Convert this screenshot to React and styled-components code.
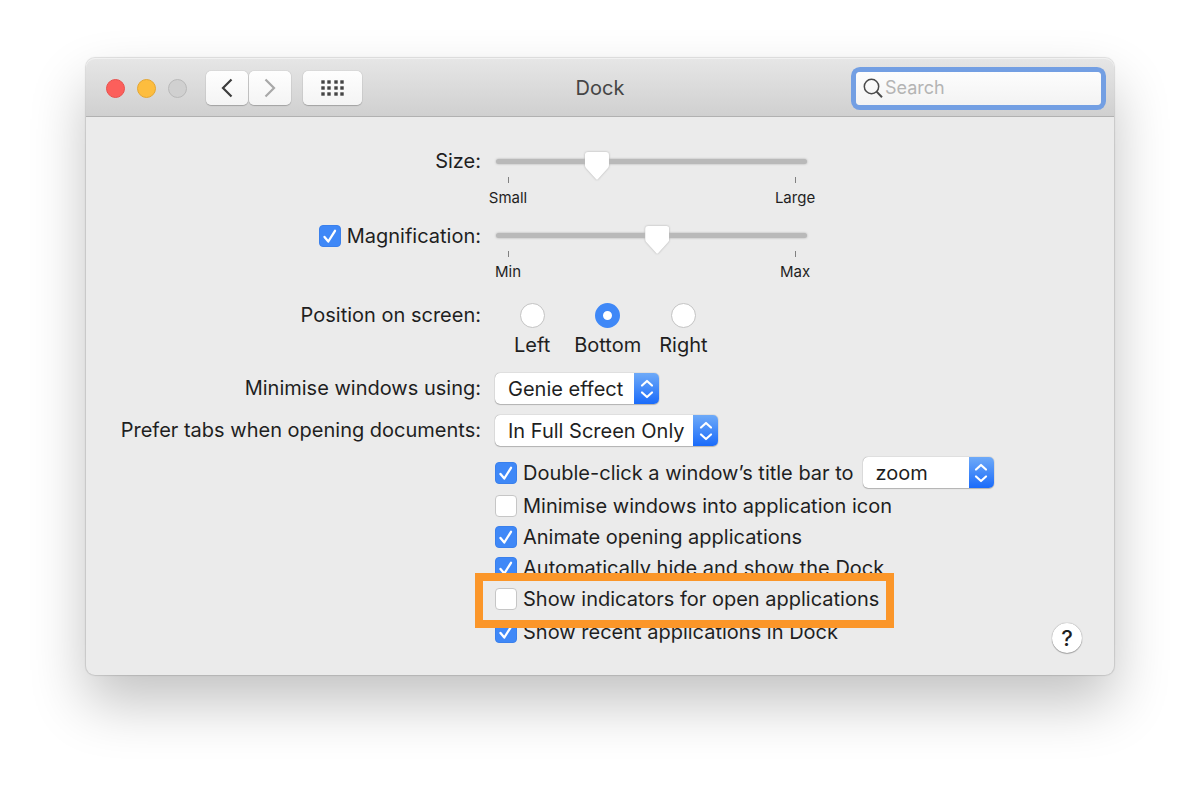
import React, { useState } from 'react'
import styled, { createGlobalStyle } from 'styled-components'

const GlobalStyle = createGlobalStyle`
  * {
    box-sizing: border-box;
  }

  body {
    margin: 0;
    background: #fff;
    color: #1f1f1f;
    font-family: Inter, 'Liberation Sans', sans-serif;
    font-size: 20px;
    line-height: 24px;
  }

  button, input, select {
    font: inherit;
    color: inherit;
    margin: 0;
  }
`

const Desktop = styled.div`
  padding: 58px 86px 96px;
`

const Window = styled.main`
  border-radius: 9px;
  background: #ebebeb;
  box-shadow: 0 0 1px 1px rgba(0, 0, 0, 0.12), 0 28px 56px rgba(0, 0, 0, 0.24);
`

const Toolbar = styled.header`
  display: grid;
  grid-template-columns: 1fr auto 1fr;
  align-items: center;
  height: 59px;
  padding: 2px 13px 0;
  border-bottom: 1px solid #b1b1b1;
  border-radius: 9px 9px 0 0;
  background: linear-gradient(#e6e6e6, #d0d0d0);
  box-shadow: inset 0 1px 0 #f1f1f1;
`

const ToolbarLeft = styled.div`
  display: flex;
  align-items: center;
  padding-left: 7px;
`

const Lights = styled.div`
  display: flex;
  gap: 12px;
  margin-right: 19px;
`

const Light = styled.button`
  width: 19px;
  height: 19px;
  padding: 0;
  border: 1px solid ${props => props.$edge};
  border-radius: 50%;
  background: ${props => props.$color};
`

const ToolButton = styled.button`
  display: flex;
  align-items: center;
  justify-content: center;
  width: ${props => (props.$wide ? '59px' : '42px')};
  height: 34px;
  margin-left: ${props => props.$space || '0'};
  padding: 0;
  border: 0;
  border-radius: 5px;
  background: linear-gradient(#fefefe, #f4f4f4);
  box-shadow: 0 0 1px rgba(0, 0, 0, 0.35), 0 1px 1px rgba(0, 0, 0, 0.2);
`

const Title = styled.h1`
  margin: 0;
  color: #454545;
  font-size: 20px;
  font-weight: 400;
`

const SearchField = styled.label`
  display: flex;
  align-items: center;
  justify-self: end;
  width: 245px;
  height: 33px;
  padding: 0 7px;
  border-radius: 4px;
  background: linear-gradient(#fdfdfd, #f3f3f3);
  box-shadow: 0 0 0 5px #739fe3;

  input {
    flex: 1;
    min-width: 0;
    padding: 0 0 0 2px;
    border: 0;
    outline: 0;
    background: none;
    font-size: 18px;
  }

  input::placeholder {
    color: #b4b4b4;
    opacity: 1;
  }
`

const Panel = styled.form`
  display: flex;
  flex-direction: column;
  padding: 35px 0 22px;
`

const Row = styled.div`
  display: grid;
  grid-template-columns: 395px 1fr;
  column-gap: 14px;
  margin-bottom: ${props => props.$after};
`

const RowLabel = styled.div`
  display: flex;
  align-items: center;
  align-self: start;
  justify-content: flex-end;
  height: ${props => props.$height};
`

const SliderBox = styled.div`
  width: 312px;
  padding: 7px 0 0 1px;
`

const Range = styled.input`
  display: block;
  width: 100%;
  height: 5px;
  appearance: none;
  outline: 0;
  border-radius: 3px;
  background: #b9b9b9;
  filter: drop-shadow(0 0 1px rgba(0, 0, 0, 0.25));

  &::-webkit-slider-runnable-track {
    height: 5px;
  }

  &::-webkit-slider-thumb {
    appearance: none;
    width: 24px;
    height: 28px;
    margin-top: -7px;
    background: #fff;
    clip-path: path('M3 0H21Q24 0 24 3V13Q24 15 23 16L13 27Q12 28 11 27L1 16Q0 15 0 13V3Q0 0 3 0Z');
  }
`

const Ticks = styled.div`
  display: flex;
  justify-content: space-between;
  margin-top: 13px;
`

const Tick = styled.span`
  display: flex;
  flex-direction: column;
  align-items: center;
  width: 24px;
  font-size: 15px;
  line-height: 20px;
  white-space: nowrap;

  &::before {
    content: '';
    width: 1px;
    height: 6px;
    margin-bottom: 5px;
    background: #808080;
  }
`

const Radios = styled.div`
  display: flex;
  padding-left: 19px;
`

const RadioLabel = styled.label`
  display: flex;
  flex-direction: column;
  align-items: center;
  gap: 5px;
  margin-right: ${props => props.$after};
`

const RadioInput = styled.input`
  width: 25px;
  height: 25px;
  appearance: none;
  border: 1px solid #c3c3c3;
  border-radius: 50%;
  background: #fff;

  &:checked {
    border: 8px solid #3f88f7;
  }
`

const CheckLabel = styled.label`
  display: flex;
  align-items: center;
  gap: 6px;
  height: 22px;
`

const CheckBox = styled.span`
  display: grid;

  input {
    grid-area: 1 / 1;
    width: 22px;
    height: 22px;
    appearance: none;
    border: 1px solid #c6c6c6;
    border-radius: 4px;
    background: #fff;
  }

  input:checked {
    border-color: #3a80ec;
    background: #3f88f7;
  }

  svg {
    grid-area: 1 / 1;
    pointer-events: none;
  }
`

const SelectBox = styled.span`
  display: inline-grid;
  width: ${props => props.$width};
  height: 31px;
  border-radius: 5px;
  overflow: hidden;
  background: #fff;
  box-shadow: 0 0 1px rgba(0, 0, 0, 0.5), 0 1px 1px rgba(0, 0, 0, 0.2);

  select {
    grid-area: 1 / 1;
    width: 100%;
    padding: 0 26px 0 13px;
    appearance: none;
    border: 0;
    outline: 0;
    background: none;
  }
`

const SelectCap = styled.span`
  grid-area: 1 / 1;
  justify-self: end;
  display: flex;
  align-items: center;
  justify-content: center;
  width: 25px;
  background: linear-gradient(#6eaaf8, #1a6bfa);
  pointer-events: none;
`

const Options = styled.div`
  display: flex;
  justify-content: space-between;
  align-items: flex-end;
  padding-right: 32px;
`

const List = styled.div`
  display: flex;
  flex-direction: column;
  align-items: flex-start;
  gap: 9px;
  padding-bottom: 10px;
`

const TitleBarOption = styled.div`
  display: flex;
  align-items: center;
  gap: 9px;
  height: 31px;
  margin-bottom: -2px;
`

const Highlight = styled.div`
  position: relative;
  margin: -15px 0 -16px -20px;
  padding: 7px 7px 10px 12px;
  border: 8px solid #fb9629;
  background: #ebebeb;
`

const HelpButton = styled.button`
  width: 30px;
  height: 30px;
  padding: 0;
  border: 0;
  border-radius: 50%;
  background: #fff;
  box-shadow: 0 0 1px rgba(0, 0, 0, 0.5), 0 1px 1px rgba(0, 0, 0, 0.25);
  font-size: 22px;
  font-weight: 500;
`

function Check({ label, checked = false, children }) {
  const [on, setOn] = useState(checked)

  return (
    <CheckLabel>
      <CheckBox>
        <input type="checkbox" aria-label={label} checked={on} onChange={() => setOn(!on)} />
        {on && (
          <svg width="22" height="22" viewBox="0 0 22 22" fill="none">
            <path d="M5.5 12L9.3 16.5L16 5.8" stroke="#fff" strokeWidth="2.3" strokeLinecap="round" strokeLinejoin="round" />
          </svg>
        )}
      </CheckBox>
      {children}
    </CheckLabel>
  )
}

function Slider({ label, value, min, max }) {
  return (
    <SliderBox>
      <Range type="range" aria-label={label} min="0" max="100" defaultValue={value} />
      <Ticks>
        <Tick>{min}</Tick>
        <Tick>{max}</Tick>
      </Ticks>
    </SliderBox>
  )
}

function Select({ id, label, width, options }) {
  return (
    <SelectBox $width={width}>
      <select id={id} aria-label={label}>
        {options.map(option => <option key={option}>{option}</option>)}
      </select>
      <SelectCap>
        <svg width="14" height="20" viewBox="0 0 14 20" fill="none" stroke="#fff" strokeWidth="2.2" strokeLinecap="round" strokeLinejoin="round">
          <path d="M2 6.5L7 2L12 6.5M2 13.5L7 18L12 13.5" />
        </svg>
      </SelectCap>
    </SelectBox>
  )
}

function Radio({ label, after, checked }) {
  return (
    <RadioLabel $after={after}>
      <RadioInput type="radio" name="position" defaultChecked={checked} />
      {label}
    </RadioLabel>
  )
}

function App() {
  return (
    <>
      <GlobalStyle />
      <Desktop>
        <Window>
          <Toolbar>
            <ToolbarLeft>
              <Lights>
                <Light aria-label="Close" $color="#fc5f5b" $edge="#e8514d" />
                <Light aria-label="Minimise" $color="#fdbd3e" $edge="#e5a631" />
                <Light aria-label="Zoom" $color="#d0d0d0" $edge="#b9b9b9" disabled />
              </Lights>
              <ToolButton aria-label="Back">
                <svg width="12" height="20" viewBox="0 0 12 20" fill="none">
                  <path d="M10.5 1.5L2 10L10.5 18.5" stroke="#3c3c3c" strokeWidth="2.2" />
                </svg>
              </ToolButton>
              <ToolButton aria-label="Forward" $space="1px">
                <svg width="12" height="20" viewBox="0 0 12 20" fill="none">
                  <path d="M1.5 1.5L10 10L1.5 18.5" stroke="#a8a8a8" strokeWidth="2.2" />
                </svg>
              </ToolButton>
              <ToolButton aria-label="Show All" $wide $space="12px">
                <svg width="23" height="16" viewBox="0 0 23 16" fill="#444">
                  {[0, 6, 12].map(y => [0, 6, 13, 19].map(x => (
                    <rect key={`${x}-${y}`} x={x + 0.3} y={y + 0.3} width="3.4" height="3.4" />
                  )))}
                </svg>
              </ToolButton>
            </ToolbarLeft>
            <Title>Dock</Title>
            <SearchField>
              <svg width="20" height="20" viewBox="0 0 20 20" fill="none" stroke="#4a4a4a">
                <circle cx="8.5" cy="8.5" r="7.2" strokeWidth="1.5" />
                <path d="M13.6 13.6L19 19.2" strokeWidth="2" />
              </svg>
              <input type="search" aria-label="Search" placeholder="Search" />
            </SearchField>
          </Toolbar>

          <Panel>
            <Row $after="18px">
              <RowLabel $height="17px">Size:</RowLabel>
              <Slider label="Size" value="31" min="Small" max="Large" />
            </Row>
            <Row $after="21px">
              <RowLabel $height="19px">
                <Check label="Magnification" checked>Magnification:</Check>
              </RowLabel>
              <Slider label="Magnification amount" value="52" min="Min" max="Max" />
            </Row>
            <Row $after="16px">
              <RowLabel $height="23px">Position on screen:</RowLabel>
              <Radios role="radiogroup" aria-label="Position on screen">
                <Radio label="Left" after="24px" />
                <Radio label="Bottom" after="18px" checked />
                <Radio label="Right" />
              </Radios>
            </Row>
            <Row $after="11px">
              <RowLabel as="label" htmlFor="minimise" $height="29px">Minimise windows using:</RowLabel>
              <Select id="minimise" width="164px" options={['Genie effect', 'Scale effect']} />
            </Row>
            <Row $after="11px">
              <RowLabel as="label" htmlFor="tabs" $height="29px">Prefer tabs when opening documents:</RowLabel>
              <Select id="tabs" width="223px" options={['In Full Screen Only', 'Always', 'Manually']} />
            </Row>
            <Row $after="0">
              <span />
              <Options>
                <List>
                  <TitleBarOption>
                    <Check checked>Double-click a window’s title bar to</Check>
                    <Select label="Title bar action" width="131px" options={['zoom', 'minimise']} />
                  </TitleBarOption>
                  <Check>Minimise windows into application icon</Check>
                  <Check checked>Animate opening applications</Check>
                  <Check checked>Automatically hide and show the Dock</Check>
                  <Highlight>
                    <Check>Show indicators for open applications</Check>
                  </Highlight>
                  <Check checked>Show recent applications in Dock</Check>
                </List>
                <HelpButton type="button" aria-label="Help">?</HelpButton>
              </Options>
            </Row>
          </Panel>
        </Window>
      </Desktop>
    </>
  )
}

export default App
